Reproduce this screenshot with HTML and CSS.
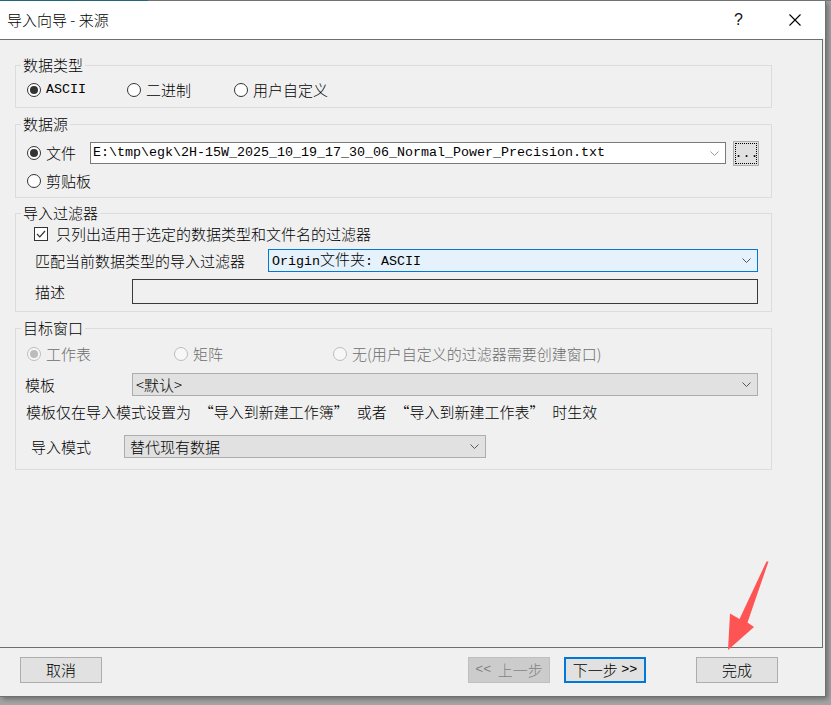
FILE: index.html
```html
<!DOCTYPE html>
<html lang="zh-CN">
<head>
<meta charset="utf-8">
<title>导入向导 - 来源</title>
<link rel="stylesheet" href="styles.css">
</head>
<body>
<div class="backdrop-strip"></div>
<div class="window">
  <div class="titlebar">
    <span class="title">导入向导 - 来源</span>
    <span class="help">?</span>
    <span class="close"><svg width="12" height="12" viewBox="0 0 12 12"><path d="M0.5 0.5 L11.5 11.5 M11.5 0.5 L0.5 11.5" stroke="#000" stroke-width="1.1" fill="none"/></svg></span>
  </div>

  <div class="panel">
    <fieldset class="group g1">
      <legend>数据类型</legend>
      <div class="row r-type">
        <label class="opt w100"><span class="radio checked"></span><span class="mono">ASCII</span></label>
        <label class="opt w107"><span class="radio"></span>二进制</label>
        <label class="opt"><span class="radio"></span>用户自定义</label>
      </div>
    </fieldset>

    <fieldset class="group g2">
      <legend>数据源</legend>
      <div class="row r-file">
        <label class="opt w63"><span class="radio checked"></span>文件</label>
        <div class="combo path-combo">
          <span class="mono path">E:\tmp\egk\2H-15W_2025_10_19_17_30_06_Normal_Power_Precision.txt</span>
          <svg class="chev light" width="9" height="5" viewBox="0 0 9 5"><polyline points="0.5,0.5 4.5,4.5 8.5,0.5" fill="none" stroke="#9a9a9a" stroke-width="1"/></svg>
        </div>
        <button class="browse"><span class="mono">...</span></button>
      </div>
      <div class="row r-clip">
        <label class="opt"><span class="radio"></span>剪贴板</label>
      </div>
    </fieldset>

    <fieldset class="group g3">
      <legend>导入过滤器</legend>
      <div class="row r-check">
        <span class="checkbox"><svg width="12" height="12" viewBox="0 0 12 12"><polyline points="2,6 4.8,8.8 10,3" fill="none" stroke="#333" stroke-width="1.2"/></svg></span>
        <span>只列出适用于选定的数据类型和文件名的过滤器</span>
      </div>
      <div class="row r-filter">
        <span class="lbl w233">匹配当前数据类型的导入过滤器</span>
        <div class="combo focus-combo w490">
          <span class="mono">Origin<span class="cjk">文件夹</span>: ASCII</span>
          <svg class="chev" width="9" height="5" viewBox="0 0 9 5"><polyline points="0.5,0.5 4.5,4.5 8.5,0.5" fill="none" stroke="#555" stroke-width="1"/></svg>
        </div>
      </div>
      <div class="row r-desc">
        <span class="lbl w97">描述</span>
        <div class="textbox"></div>
      </div>
    </fieldset>

    <fieldset class="group g4">
      <legend>目标窗口</legend>
      <div class="row r-target disabled">
        <label class="opt w147"><span class="radio checked"></span>工作表</label>
        <label class="opt w159"><span class="radio"></span>矩阵</label>
        <label class="opt"><span class="radio"></span>无(用户自定义的过滤器需要创建窗口)</label>
      </div>
      <div class="row r-tpl">
        <span class="lbl w107">模板</span>
        <div class="combo gray-combo w626">
          <span>&lt;默认&gt;</span>
          <svg class="chev" width="9" height="5" viewBox="0 0 9 5"><polyline points="0.5,0.5 4.5,4.5 8.5,0.5" fill="none" stroke="#555" stroke-width="1"/></svg>
        </div>
      </div>
      <div class="row r-note">
        <span class="note">模板仅在导入模式设置为 “导入到新建工作簿” 或者 “导入到新建工作表” 时生效</span>
      </div>
      <div class="row r-mode">
        <span class="lbl w93">导入模式</span>
        <div class="combo gray-combo w362 mode-combo">
          <span>替代现有数据</span>
          <svg class="chev" width="9" height="5" viewBox="0 0 9 5"><polyline points="0.5,0.5 4.5,4.5 8.5,0.5" fill="none" stroke="#555" stroke-width="1"/></svg>
        </div>
      </div>
    </fieldset>
  </div>

  <div class="footer">
    <button class="btn">取消</button>
    <button class="btn btn-prev" disabled><span class="mono">&lt;&lt;</span>&nbsp; 上一步</button>
    <button class="btn btn-next">下一步&nbsp; <span class="mono">&gt;&gt;</span></button>
    <button class="btn btn-finish">完成</button>
  </div>
</div>

<svg class="annotation" width="831" height="705" viewBox="0 0 831 705">
  <polygon points="768.5,561.5 747.5,622.5 754,627 728,650 730,613.5 739.5,619 766.5,561.5" fill="#ff5454"/>
</svg>
</body>
</html>
```

FILE: styles.css
```css
* { box-sizing: border-box; }

html, body {
  margin: 0;
  padding: 0;
}

body {
  width: 831px;
  height: 705px;
  overflow: hidden;
  position: relative;
  background: #a4a4a4;
  font-family: "Noto Sans CJK SC", "Noto Sans", sans-serif;
  font-size: 15px;
  font-weight: 300;
  color: #000;
}

.mono {
  font-family: "Liberation Mono", "Noto Sans CJK SC", monospace;
  font-size: 13.33px;
  font-weight: 400;
}

.cjk {
  font-family: "Noto Sans CJK SC", sans-serif;
  font-size: 15px;
  font-weight: 300;
}

.backdrop-strip {
  height: 1px;
  background: linear-gradient(to right, #246c86 0, #246c86 148px, #7a7a7a 148px);
}

.window {
  width: 826px;
  height: 696px;
  background: #f0f0f0;
  border-right: 1px solid #6f6f6f;
  border-bottom: 1px solid #6f6f6f;
  display: flex;
  flex-direction: column;
  box-shadow: 2px 2px 5px rgba(0, 0, 0, 0.35);
}

.titlebar {
  height: 38px;
  flex: none;
  background: #fff;
  display: flex;
  align-items: center;
  padding-left: 7px;
}

.title {
  font-size: 15px;
  line-height: 20px;
}

.help {
  margin-left: auto;
  font-family: "Liberation Sans", sans-serif;
  font-size: 16px;
  font-weight: 300;
  width: 9px;
  color: #111;
}

.close {
  display: flex;
  margin-left: 46px;
  margin-right: 24px;
}

.panel {
  flex: none;
  width: 823px;
  height: 609px;
  border-top: 1px solid #6e6e6e;
  border-right: 1px solid #6e6e6e;
  border-bottom: 1px solid #6e6e6e;
  padding: 15px 0 0 15px;
}

.group {
  margin: 0;
  width: 757px;
  min-inline-size: 0;
  border: 1px solid #dcdcdc;
  padding: 0 0 0 5px;
}

.group + .group { margin-top: 6px; }
.group.g3 { margin-top: 5px; }

.group legend {
  padding: 0 2px;
  line-height: 20px;
  height: 20px;
  font-size: 15px;
}

.g1 { padding-bottom: 7px; }
.g2 { padding-bottom: 6px; }
.g3 { padding-bottom: 7px; }
.g4 { padding-bottom: 11px; }

.row {
  display: flex;
  align-items: center;
  line-height: 20px;
  white-space: nowrap;
}

.r-type { height: 20px; margin-top: 5px; padding-left: 6px; }
.r-file { height: 26px; margin-top: 6px; padding-left: 6px; }
.r-clip { height: 20px; margin-top: 5px; padding-left: 6px; }
.r-check { height: 20px; margin-top: 1px; padding-left: 13px; }
.r-filter { height: 23px; margin-top: 5px; padding-left: 14px; }
.r-desc { height: 25px; margin-top: 7px; padding-left: 14px; }
.r-target { height: 20px; margin-top: 6px; padding-left: 6px; }
.r-tpl { height: 23px; margin-top: 9px; padding-left: 4px; }
.r-note { height: 20px; margin-top: 6px; padding-left: 5px; }
.r-mode { height: 23px; margin-top: 13px; padding-left: 10px; }

.note { word-spacing: 4.5px; }

.opt {
  display: flex;
  align-items: center;
}

.w63 { width: 63px; }
.w93 { width: 93px; }
.w97 { width: 97px; }
.w100 { width: 100px; }
.w107 { width: 107px; }
.w147 { width: 147px; }
.w159 { width: 159px; }
.w233 { width: 233px; }
.w362 { width: 362px; }
.w490 { width: 490px; }
.w626 { width: 626px; }

.lbl { flex: none; }

.radio {
  flex: none;
  position: relative;
  width: 14px;
  height: 14px;
  border: 1px solid #333;
  border-radius: 50%;
  background: #fff;
  margin-right: 5px;
}

.radio.checked::after {
  content: "";
  position: absolute;
  left: 2px;
  top: 2px;
  width: 8px;
  height: 8px;
  border-radius: 50%;
  background: #333;
}

.disabled { color: #6d6d6d; }
.disabled .radio {
  border-color: #bcbcbc;
  background: #f7f7f7;
}
.disabled .radio.checked::after { background: #bcbcbc; }

.checkbox {
  flex: none;
  width: 14px;
  height: 14px;
  border: 1px solid #333;
  background: #fff;
  margin-right: 8px;
  display: flex;
  align-items: center;
  justify-content: center;
}

.combo {
  flex: none;
  height: 23px;
  display: flex;
  align-items: center;
  justify-content: space-between;
  padding: 0 6px 0 3px;
}

.path-combo {
  width: 636px;
  height: 22px;
  background: #fff;
  border: 1px solid #7a7a7a;
  padding-left: 2px;
}

.focus-combo {
  background: #e5f1fb;
  border: 1px solid #0078d7;
}

.gray-combo {
  background: #e1e1e1;
  border: 1px solid #adadad;
}

.mode-combo { padding-left: 5px; }

.textbox {
  flex: none;
  width: 626px;
  height: 25px;
  border: 1px solid #3a3a3a;
  background: #f0f0f0;
}

.browse {
  flex: none;
  width: 26px;
  height: 25px;
  margin-left: 7px;
  padding: 0 0 0 1px;
  background: #e1e1e1;
  border: 1px solid #adadad;
  outline: 1px dotted #000;
  outline-offset: -3px;
  display: flex;
  align-items: flex-end;
  justify-content: center;
  line-height: 16px;
  padding-bottom: 3px;
  color: #000;
}

.footer {
  flex: none;
  height: 48px;
  display: flex;
  align-items: flex-start;
  padding: 9px 0 0 20px;
}

.btn {
  width: 82px;
  height: 26px;
  padding: 0;
  background: #e1e1e1;
  border: 1px solid #adadad;
  font-family: "Noto Sans CJK SC", sans-serif;
  font-size: 15px;
  font-weight: 300;
  line-height: 20px;
  color: #000;
  display: flex;
  align-items: center;
  justify-content: center;
  white-space: nowrap;
}

.btn-prev {
  margin-left: 366px;
  background: #cccccc;
  border-color: #bfbfbf;
  color: #838383;
}

.btn-next {
  margin-left: 14px;
  border: 2px solid #0078d7;
}

.btn-finish { margin-left: 50px; }

.annotation {
  position: absolute;
  left: 0;
  top: 0;
  pointer-events: none;
}
```
